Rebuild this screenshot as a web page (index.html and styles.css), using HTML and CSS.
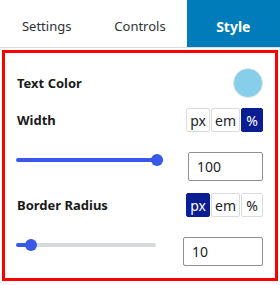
FILE: index.html
```html
<!DOCTYPE html>
<html lang="en">
<head>
    <meta charset="UTF-8">
    <meta name="viewport" content="width=device-width, initial-scale=1.0">
    <title>Style panel</title>
    <link rel="stylesheet" href="styles.css">
</head>
<body>
    <div class="tabs">
        <div class="tab">Settings</div>
        <div class="tab">Controls</div>
        <div class="tab active">Style</div>
    </div>

    <div class="panel">
        <div class="row color-row">
            <span class="label">Text Color</span>
            <span class="swatch"></span>
        </div>

        <div class="group">
            <div class="row">
                <span class="label">Width</span>
                <div class="units">
                    <button class="unit">px</button>
                    <button class="unit">em</button>
                    <button class="unit active">%</button>
                </div>
            </div>
            <div class="slider-row">
                <input class="range range-wide" type="range" min="0" max="100" value="100" style="--p: 100%">
                <input class="num num-narrow" type="text" value="100">
            </div>
        </div>

        <div class="group">
            <div class="row">
                <span class="label">Border Radius</span>
                <div class="units">
                    <button class="unit active">px</button>
                    <button class="unit">em</button>
                    <button class="unit">%</button>
                </div>
            </div>
            <div class="slider-row">
                <input class="range range-short" type="range" min="0" max="150" value="10" style="--p: 7%">
                <input class="num num-wide" type="text" value="10">
            </div>
        </div>
    </div>
</body>
</html>
```

FILE: styles.css
```css
body {
    margin: 0;
    font-family: "Noto Sans", Arial, sans-serif;
    background: #fff;
    color: #1d2327;
}
.tabs {
    display: flex;
    border-bottom: 1px solid #dcdcde;
}
.tab {
    flex: 1;
    height: 47px;
    box-sizing: border-box;
    padding-top: 17px;
    text-align: center;
    font-size: 13px;
    color: #2c3338;
}
.tab.active {
    background: #007cba;
    color: #fff;
    font-weight: bold;
    font-size: 14px;
}
.panel {
    margin: 2px 2px 0;
    border: 3px solid #f00;
    padding: 15px 12px 12px;
}
.row {
    display: flex;
    align-items: center;
    justify-content: space-between;
}
.label {
    font-size: 13px;
    font-weight: bold;
    color: #1a1a1a;
}
.swatch {
    width: 30px;
    height: 30px;
    box-sizing: border-box;
    border-radius: 50%;
    background: #87ceeb;
    border: 1px solid #e2e4e7;
}
.group {
    margin-top: 10px;
}
.group + .group {
    margin-top: 12px;
}
.units {
    display: flex;
    gap: 1px;
}
.unit {
    height: 24px;
    padding: 0 3px;
    min-width: 22px;
    border: 1px solid #dcdcde;
    border-radius: 2px;
    background: #fff;
    font-family: "Noto Sans", Arial, sans-serif;
    font-size: 14px;
    color: #1d2327;
}
.unit.active {
    background: #0a1d93;
    border-color: #0a1d93;
    color: #fff;
}
.slider-row {
    display: flex;
    align-items: flex-start;
    justify-content: space-between;
    margin-top: 20px;
}
.range {
    -webkit-appearance: none;
    appearance: none;
    margin: 6px 0 0 -1px;
    height: 4px;
    border-radius: 2px;
    background: linear-gradient(to right, #3858e9 var(--p), #d6dadf var(--p));
}
.range::-webkit-slider-thumb {
    -webkit-appearance: none;
    width: 12px;
    height: 12px;
    border-radius: 50%;
    background: #3858e9;
    border: none;
}
.range-wide { width: 147px; }
.range-short { width: 140px; }
.num {
    height: 29px;
    box-sizing: border-box;
    border: 1px solid #8c8f94;
    border-radius: 2px;
    padding: 0 8px;
    font-family: "Noto Sans", Arial, sans-serif;
    font-size: 14px;
    color: #1d2327;
}
.num-narrow { width: 75px; }
.num-wide { width: 80px; }
```
